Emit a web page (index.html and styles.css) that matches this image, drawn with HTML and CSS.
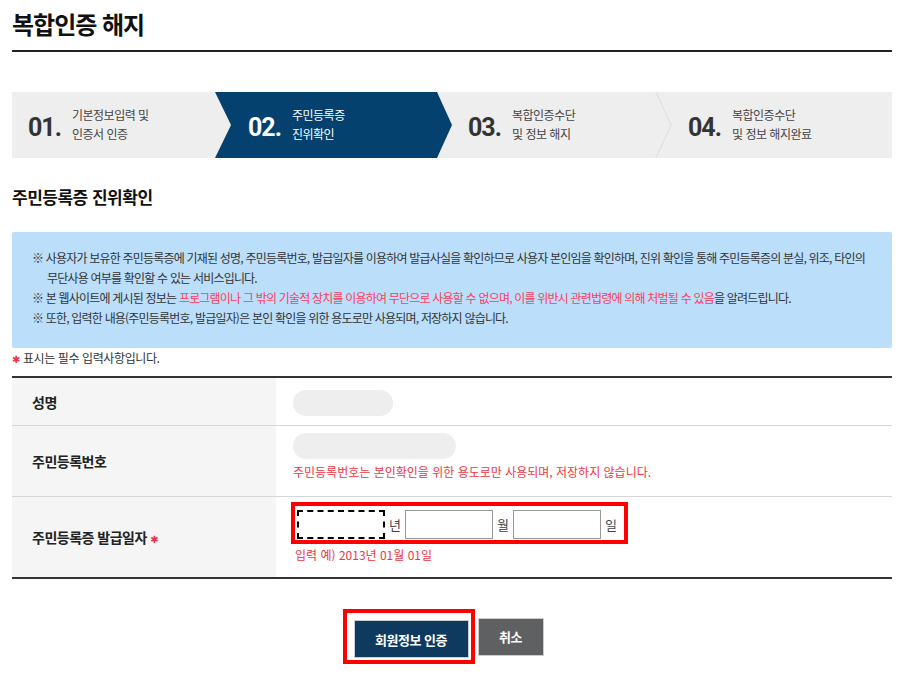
FILE: index.html
```html
<!DOCTYPE html>
<html lang="ko">
<head>
    <meta charset="UTF-8">
    <meta name="viewport" content="width=device-width, initial-scale=1.0">
    <title>복합인증 해지</title>
    <link rel="stylesheet" href="styles.css">
</head>
<body>
    <div class="wrap">
        <h1 class="page-title">복합인증 해지</h1>

        <ol class="steps">
            <li class="step">
                <span class="step-num">01.</span>
                <span class="step-txt">기본정보입력 및<br>인증서 인증</span>
            </li>
            <li class="step active">
                <span class="step-num">02.</span>
                <span class="step-txt">주민등록증<br>진위확인</span>
            </li>
            <li class="step">
                <span class="step-num">03.</span>
                <span class="step-txt">복합인증수단<br>및 정보 해지</span>
                <svg class="step-sep" width="17" height="66" viewBox="0 0 17 66">
                    <polyline points="1,0 16,33 1,66" fill="none" stroke="#dcdcdc" stroke-width="1"/>
                </svg>
            </li>
            <li class="step">
                <span class="step-num">04.</span>
                <span class="step-txt">복합인증수단<br>및 정보 해지완료</span>
            </li>
        </ol>

        <h2 class="sec-title">주민등록증 진위확인</h2>

        <div class="info-box">
            <ul>
                <li>※ 사용자가 보유한 주민등록증에 기재된 성명, 주민등록번호, 발급일자를 이용하여 발급사실을 확인하므로 사용자 본인임을 확인하며, 진위 확인을 통해 주민등록증의 분실, 위조, 타인의 무단사용 여부를 확인할 수 있는 서비스입니다.</li>
                <li>※ 본 웹사이트에 게시된 정보는 <em>프로그램이나 그 밖의 기술적 장치를 이용하여 무단으로 사용할 수 없으며, 이를 위반시 관련법령에 의해 처벌될 수 있음</em>을 알려드립니다.</li>
                <li>※ 또한, 입력한 내용(주민등록번호, 발급일자)은 본인 확인을 위한 용도로만 사용되며, 저장하지 않습니다.</li>
            </ul>
        </div>

        <p class="req-note"><span class="req">✱</span> 표시는 필수 입력사항입니다.</p>

        <table class="form-table">
            <tr class="row-name">
                <th>성명</th>
                <td><span class="masked short"></span></td>
            </tr>
            <tr class="row-jumin">
                <th>주민등록번호</th>
                <td>
                    <span class="masked long"></span>
                    <p class="red-note">주민등록번호는 본인확인을 위한 용도로만 사용되며, 저장하지 않습니다.</p>
                </td>
            </tr>
            <tr class="row-date">
                <th>주민등록증 발급일자 <span class="req">✱</span></th>
                <td>
                    <div class="date-box">
                        <input type="text" class="date-input focus" title="년">
                        <span class="unit">년</span>
                        <input type="text" class="date-input" title="월">
                        <span class="unit">월</span>
                        <input type="text" class="date-input" title="일">
                        <span class="unit">일</span>
                    </div>
                    <p class="red-note">입력 예) 2013년 01월 01일</p>
                </td>
            </tr>
        </table>

        <div class="btn-area">
            <div class="btn-mark">
                <button class="btn btn-primary">회원정보 인증</button>
            </div>
            <button class="btn btn-gray">취소</button>
        </div>
    </div>
</body>
</html>
```

FILE: styles.css
```css
body {
    margin: 0;
    font-family: "Noto Sans CJK KR", "Noto Sans", sans-serif;
    color: #222;
    background-color: #fff;
}

.wrap {
    width: 880px;
    padding: 0 12px;
}

.page-title {
    margin: 0;
    padding: 7px 0 9px;
    font-size: 24px;
    line-height: 34px;
    font-weight: 700;
    color: #111;
    letter-spacing: -1px;
    border-bottom: 2px solid #222;
}

/* steps */
.steps {
    display: flex;
    margin: 40px 0 0;
    padding: 0;
    list-style: none;
    background-color: #eee;
    height: 66px;
}

.step {
    position: relative;
    flex: 1;
    display: flex;
    align-items: center;
    padding-left: 16px;
    color: #444;
}

.step.active::before {
    content: "";
    position: absolute;
    top: 0;
    bottom: 0;
    left: -17px;
    right: 0;
    background-color: #05416f;
    clip-path: polygon(0 0, calc(100% - 15px) 0, 100% 50%, calc(100% - 15px) 100%, 0 100%, 16px 50%);
}

.step-num,
.step-txt {
    position: relative;
}

.step-num {
    font-family: Roboto, "Liberation Sans", sans-serif;
    font-size: 25px;
    font-weight: 700;
    letter-spacing: -1px;
    color: #333;
    width: 44px;
    padding-top: 4px;
}

.step-txt {
    font-size: 12px;
    line-height: 19px;
    letter-spacing: -0.5px;
    align-self: flex-start;
    margin-top: 13px;
}

.step.active .step-num,
.step.active .step-txt {
    color: #fff;
}

.step-sep {
    position: absolute;
    right: 0;
    top: 0;
}

.sec-title {
    margin: 26px 0 0;
    font-size: 17px;
    line-height: 26px;
    font-weight: 700;
    color: #111;
    letter-spacing: -0.5px;
}

/* info */
.info-box {
    margin-top: 22px;
    padding: 16px 20px 20px;
    background-color: #bbdefa;
    border-radius: 2px;
}

.info-box ul {
    margin: 0;
    padding: 0;
    list-style: none;
}

.info-box li {
    font-size: 12px;
    line-height: 20px;
    color: #333;
    letter-spacing: -0.8px;
    padding-left: 15px;
    text-indent: -15px;
}

.info-box em {
    font-style: normal;
    color: #ff3b5c;
}

.req-note {
    margin: 1px 0 0;
    height: 18px;
    font-size: 12px;
    line-height: 18px;
    letter-spacing: -0.4px;
    color: #333;
}

.req {
    color: #e8344a;
    font-family: "DejaVu Sans", sans-serif;
    font-size: 10px;
    line-height: 1;
    font-weight: 700;
}

/* table */
.form-table {
    width: 100%;
    margin-top: 9px;
    border-collapse: collapse;
    border-top: 2px solid #333;
    border-bottom: 2px solid #333;
}

.form-table th {
    width: 244px;
    padding: 0 0 0 20px;
    text-align: left;
    font-size: 14px;
    font-weight: 700;
    color: #222;
    background-color: #f5f5f5;
    letter-spacing: -0.5px;
}

.form-table td {
    padding: 0 0 0 17px;
    vertical-align: top;
}

.form-table tr + tr th,
.form-table tr + tr td {
    border-top: 1px solid #d6d6d6;
}

.row-name th,
.row-name td {
    height: 47px;
}

.row-name td {
    padding-top: 12px;
    box-sizing: border-box;
}

.row-jumin th {
    height: 70px;
}

.row-jumin td {
    padding-top: 7px;
}

.row-date th {
    height: 80px;
}

.row-date td {
    padding-top: 5px;
    padding-left: 15px;
}

.masked {
    display: block;
    height: 26px;
    border-radius: 13px;
    background-color: #eee;
}

.masked.short {
    width: 100px;
}

.masked.long {
    width: 163px;
}

.red-note {
    margin: 4px 0 0;
    font-size: 12px;
    line-height: 18px;
    color: #f0363f;
    letter-spacing: 0;
}

.row-date .red-note {
    margin-top: 2px;
    padding-left: 4px;
}

.date-box {
    display: inline-flex;
    align-items: center;
    border: 4px solid #ff0000;
    padding: 4px 3px 1px 2px;
}

.date-input {
    width: 86px;
    height: 27px;
    margin: 0;
    padding: 0;
    border: 1px solid #999;
    box-sizing: content-box;
    background-color: #fff;
}

.date-input.focus {
    border: 2px dashed #000;
    width: 84px;
    height: 25px;
}

.unit {
    font-size: 13px;
    color: #444;
    padding: 0 4px;
}

/* buttons */
.btn-area {
    display: flex;
    justify-content: center;
    align-items: center;
    gap: 3px;
    margin-top: 30px;
    padding-right: 18px;
}

.btn-mark {
    border: 4px solid #ff0000;
    padding: 7px 2px 2px 7px;
}

.btn {
    display: block;
    border: 1px solid #ccc;
    height: 38px;
    font-family: "Noto Sans CJK KR", sans-serif;
    font-size: 13px;
    font-weight: 700;
    color: #fff;
    cursor: pointer;
    letter-spacing: -0.5px;
}

.btn-primary {
    width: 115px;
    background-color: #0e3a60;
}

.btn-gray {
    width: 66px;
    background-color: #5f6062;
}
```
